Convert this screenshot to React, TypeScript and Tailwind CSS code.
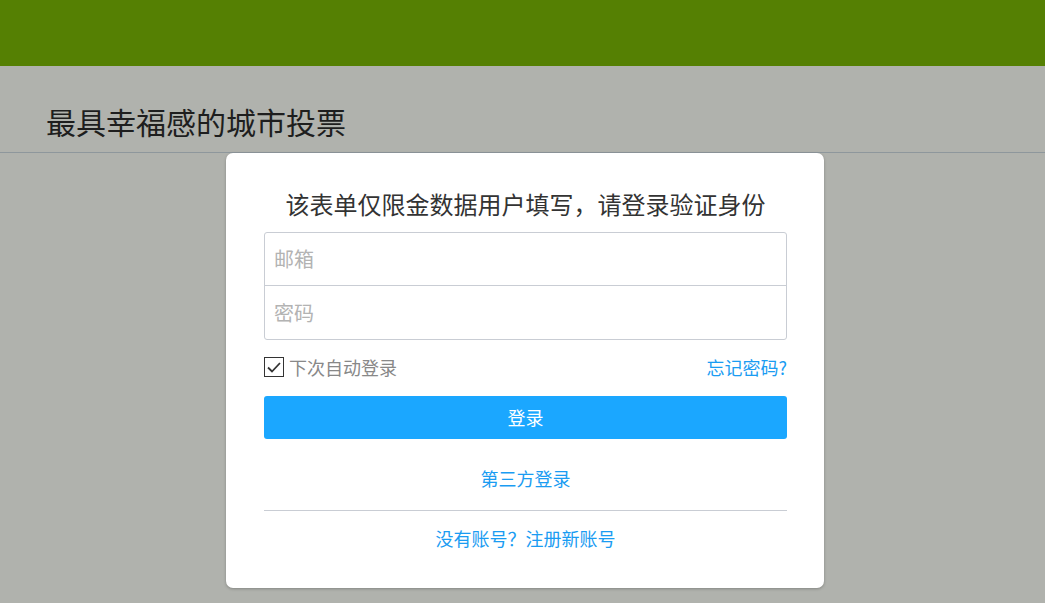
export default function App() {
  const font = { fontFamily: '"Noto Sans CJK SC", "Noto Sans", sans-serif' };
  return (
    <div className="min-h-[603px] w-full bg-[#b0b2ad] flex flex-col" style={font}>
      <div className="h-[66px] bg-[#558003] shrink-0" />
      <div className="h-[87px] border-b border-[#8e979c] pl-[46px] flex items-center pt-[24px] shrink-0">
        <h1 className="text-[30px] leading-[36px] text-[#1e1e1e] font-normal">最具幸福感的城市投票</h1>
      </div>
      <div className="flex justify-center pl-[5px]">
        <div className="w-[598px] bg-white rounded-[7px] shadow-[0_1px_3px_rgba(0,0,0,0.25)] pl-[38px] pr-[37px] pt-[33px] pb-[36px]">
          <h2 className="text-center text-[24px] leading-[36px] text-[#333]">该表单仅限金数据用户填写，请登录验证身份</h2>
          <div className="mt-[10px] border border-[#c9cdd4] rounded-[3px]">
            <div className="h-[52px] flex items-center px-[9px] text-[20px] text-[#b3b3b3]">邮箱</div>
            <div className="h-[54px] border-t border-[#c9cdd4] flex items-center px-[9px] text-[20px] text-[#b3b3b3]">密码</div>
          </div>
          <div className="mt-[15px] h-[24px] flex items-center justify-between">
            <div className="flex items-center">
              <div className="w-[20px] h-[20px] border-[1.5px] border-[#333] flex items-center justify-center">
                <svg width="16" height="16" viewBox="0 0 16 16">
                  <path d="M2 8.5 L6 12.5 L14 4" fill="none" stroke="#333" strokeWidth="1.8" />
                </svg>
              </div>
              <span className="ml-[5px] text-[18px] text-[#888]">下次自动登录</span>
            </div>
            <span className="text-[18px] text-[#1a9cf2]">忘记密码?</span>
          </div>
          <div className="mt-[17px] h-[43px] bg-[#1ba7ff] rounded-[3px] flex items-center justify-center text-white text-[18px]">
            登录
          </div>
          <div className="mt-[26px] text-center text-[18px] leading-[27px] text-[#1a9cf2]">第三方登录</div>
          <div className="mt-[18px] h-px bg-[#c9cdd4]" />
          <div className="mt-[14px] text-center text-[18px] leading-[27px] text-[#1a9cf2]">没有账号？注册新账号</div>
        </div>
      </div>
    </div>
  );
}
